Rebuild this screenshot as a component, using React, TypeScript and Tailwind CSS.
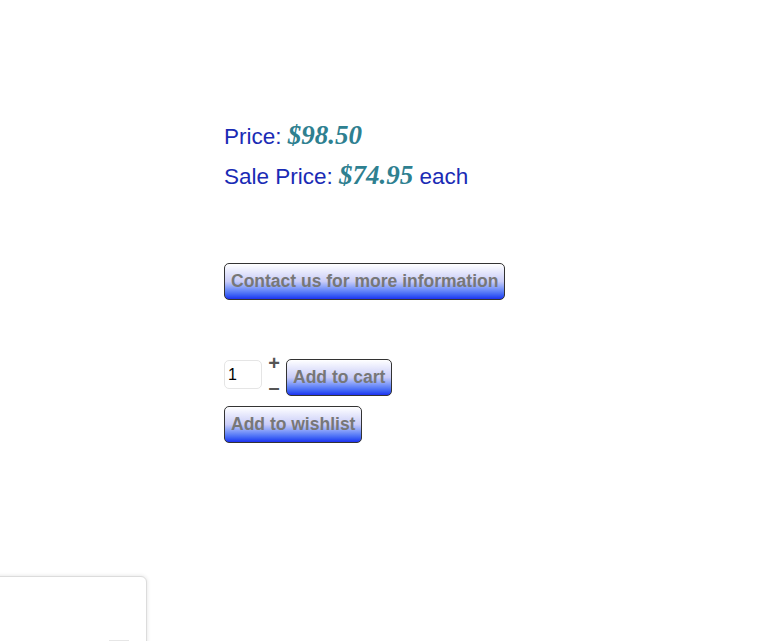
const btn =
  "rounded-[5px] border border-[#333] bg-gradient-to-b from-white via-[#c9ccf7] to-[#1f2ef0] px-[6px] h-[37px] text-[17.5px] font-bold text-[#777] leading-none font-['Liberation_Sans',Arial,sans-serif]"

const price = "font-['Liberation_Serif','Times_New_Roman',serif] italic font-bold text-[27px] leading-none text-[#2e8090]"

export default function App() {
  return (
    <div className="relative w-[779px] h-[641px] overflow-hidden bg-white font-['Liberation_Sans',Arial,sans-serif]">
      <div className="pl-[224px] pt-[117px]">
        <div className="text-[22.5px] leading-[40px] text-[#1a2bb5]">
          <div className="h-[40px]">
            Price: <span className={price}>$98.50</span>
          </div>
          <div className="h-[40px]">
            Sale Price: <span className={price}>$74.95</span> each
          </div>
        </div>

        <div className="mt-[66px]">
          <button className={btn}>Contact us for more information</button>
        </div>

        <div className="mt-[59px] flex h-[37px] items-start">
          <input
            defaultValue="1"
            className="mt-[1px] w-[38px] h-[29px] rounded-[5px] border border-[#e5e5e5] px-[3px] text-[16px] text-black outline-none"
          />
          <div className="ml-[6px] flex w-[12px] flex-col items-center text-[#555] font-bold leading-none">
            <span className="text-[20px] -mt-[6px]">+</span>
            <span className="text-[20px] mt-[4px]">–</span>
          </div>
          <button className={btn + " ml-[6px]"}>Add to cart</button>
        </div>

        <div className="mt-[10px]">
          <button className={btn}>Add to wishlist</button>
        </div>
      </div>

      <div className="absolute left-[-10px] top-[576px] w-[157px] h-[80px] rounded-tr-[6px] border border-[#dcdcdc] bg-white shadow-[0_0_4px_rgba(0,0,0,0.12)]">
        <div className="absolute left-[118px] bottom-[14px] w-[20px] h-[1px] bg-[#e6e6e6]" />
      </div>
    </div>
  )
}
